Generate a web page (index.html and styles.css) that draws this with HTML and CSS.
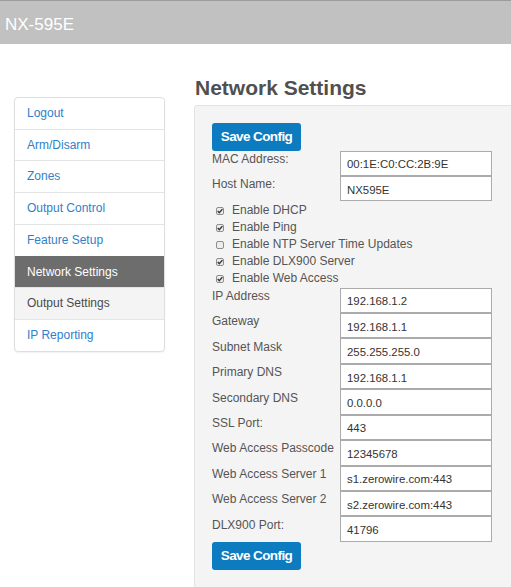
FILE: index.html
```html
<!DOCTYPE html>
<html>
<head>
<meta charset="utf-8">
<link rel="stylesheet" href="styles.css">
</head>
<body>
<header class="topbar">NX-595E</header>
<div class="layout">
  <nav class="sidebar">
    <a class="item">Logout</a>
    <a class="item">Arm/Disarm</a>
    <a class="item">Zones</a>
    <a class="item">Output Control</a>
    <a class="item">Feature Setup</a>
    <a class="item active">Network Settings</a>
    <a class="item hover">Output Settings</a>
    <a class="item">IP Reporting</a>
  </nav>
  <main class="content">
    <h1 class="title">Network Settings</h1>
    <div class="panel">
      <button class="btn">Save Config</button>
      <div class="fields">
        <label class="lbl">MAC Address:</label><input class="inp" value="00:1E:C0:CC:2B:9E">
        <label class="lbl">Host Name:</label><input class="inp" value="NX595E">
      </div>
      <div class="checks">
        <div class="check"><svg class="box" viewBox="0 0 8 8"><rect x="0.5" y="0.5" width="7" height="7" rx="1.5"/><path d="M1.7 4.1 L3.3 5.8 L6.4 2.1"/></svg>Enable DHCP</div>
        <div class="check"><svg class="box" viewBox="0 0 8 8"><rect x="0.5" y="0.5" width="7" height="7" rx="1.5"/><path d="M1.7 4.1 L3.3 5.8 L6.4 2.1"/></svg>Enable Ping</div>
        <div class="check"><svg class="box" viewBox="0 0 8 8"><rect x="0.5" y="0.5" width="7" height="7" rx="1.5"/></svg>Enable NTP Server Time Updates</div>
        <div class="check"><svg class="box" viewBox="0 0 8 8"><rect x="0.5" y="0.5" width="7" height="7" rx="1.5"/><path d="M1.7 4.1 L3.3 5.8 L6.4 2.1"/></svg>Enable DLX900 Server</div>
        <div class="check"><svg class="box" viewBox="0 0 8 8"><rect x="0.5" y="0.5" width="7" height="7" rx="1.5"/><path d="M1.7 4.1 L3.3 5.8 L6.4 2.1"/></svg>Enable Web Access</div>
      </div>
      <div class="fields">
        <label class="lbl">IP Address</label><input class="inp" value="192.168.1.2">
        <label class="lbl">Gateway</label><input class="inp" value="192.168.1.1">
        <label class="lbl">Subnet Mask</label><input class="inp" value="255.255.255.0">
        <label class="lbl">Primary DNS</label><input class="inp" value="192.168.1.1">
        <label class="lbl">Secondary DNS</label><input class="inp" value="0.0.0.0">
        <label class="lbl">SSL Port:</label><input class="inp" value="443">
        <label class="lbl">Web Access Passcode</label><input class="inp" value="12345678">
        <label class="lbl">Web Access Server 1</label><input class="inp" value="s1.zerowire.com:443">
        <label class="lbl">Web Access Server 2</label><input class="inp" value="s2.zerowire.com:443">
        <label class="lbl">DLX900 Port:</label><input class="inp" value="41796">
      </div>
      <button class="btn">Save Config</button>
    </div>
  </main>
</div>
</body>
</html>
```
FILE: styles.css
```css
html, body {
  margin: 0;
  padding: 0;
  overflow: hidden;
  background: #fff;
  font-family: "Liberation Sans", Arial, sans-serif;
  font-size: 12px;
  color: #555;
}

.topbar {
  box-sizing: border-box;
  height: 44px;
  border-top: 1px solid #9c9c9c;
  background: #c1c1c1;
  color: #fff;
  font-size: 17px;
  line-height: 20px;
  padding: 13.5px 0 0 5px;
}

.layout {
  display: flex;
  align-items: flex-start;
}

.sidebar {
  display: flex;
  flex-direction: column;
  box-sizing: border-box;
  width: 151px;
  margin: 53px 0 0 14px;
  border: 1px solid #dedede;
  border-radius: 4px;
  box-shadow: 0 1px 2px rgba(0, 0, 0, 0.06);
  background: #fff;
  overflow: hidden;
}

.item {
  display: block;
  padding: 7px 12px 7px 12px;
  line-height: 16.7px;
  color: #2f80cb;
  border-top: 1px solid #e4e4e4;
}

.item:first-child {
  border-top: none;
}

.item.active {
  background: #6d6d6d;
  color: #fff;
  border-top-color: #6d6d6d;
}

.item.hover {
  background: #f4f4f4;
  color: #4a4a4a;
}

.content {
  flex: 1;
  margin: 0 -12px 0 29px;
}

.title {
  margin: 32px 0 4.5px 1px;
  font-size: 21px;
  line-height: 24px;
  font-weight: bold;
  color: #505050;
}

.panel {
  border: 1px solid #e3e3e3;
  border-radius: 3px;
  background: #f4f4f4;
  padding: 17px 17px 17px 17px;
}

.btn {
  display: flex;
  align-items: center;
  justify-content: center;
  box-sizing: border-box;
  width: 89px;
  height: 28px;
  margin: 0;
  padding: 0 0 1px 0;
  border: none;
  border-radius: 3px;
  background: #0c7bbf;
  color: #fff;
  font-family: "Liberation Sans", Arial, sans-serif;
  font-size: 13.5px;
  font-weight: bold;
  letter-spacing: -0.6px;
}

.fields {
  display: grid;
  grid-template-columns: 128px 152px;
  grid-auto-rows: 25.45px;
}

.lbl {
  padding-top: 1.3px;
  line-height: 14px;
  color: #555;
  white-space: nowrap;
}

.inp {
  box-sizing: border-box;
  width: 152px;
  height: 25.45px;
  margin: 0;
  padding: 2px 5px 0 6px;
  border: 1px solid #ababab;
  background: #fff;
  color: #333;
  font-family: "Liberation Sans", Arial, sans-serif;
  font-size: 11.4px;
  outline: none;
}

.checks {
  padding-top: 0.5px;
}

.check {
  display: flex;
  align-items: center;
  height: 17.14px;
  line-height: 17.14px;
  padding-left: 4px;
  color: #555;
}

.box {
  width: 8px;
  height: 8px;
  margin: 1px 8px 0 0;
  flex: none;
}

.box rect {
  fill: #ededed;
  stroke: #8e8e8e;
  stroke-width: 1;
}

.box path {
  fill: none;
  stroke: #333;
  stroke-width: 1.4;
}
```
